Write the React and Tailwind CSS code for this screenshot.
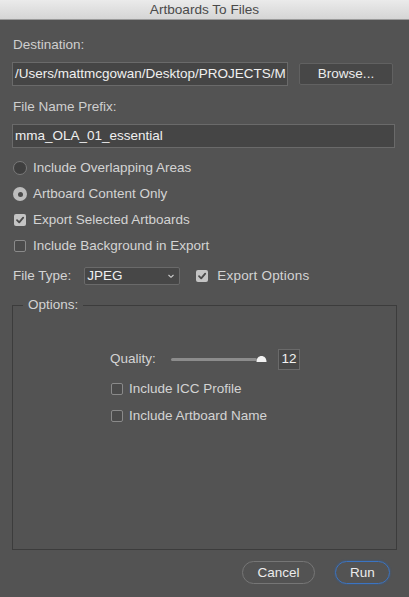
import React from "react";

const font = { fontFamily: '"Liberation Sans", Arial, sans-serif' };

function Checkbox({ checked }) {
  return checked ? (
    <span className="flex h-[12px] w-[12px] items-center justify-center rounded-[2px] bg-[#c4c4c4]">
      <svg width="10" height="10" viewBox="0 0 10 10">
        <path d="M2 5.2 L4.2 7.4 L8.2 2.6" fill="none" stroke="#4a4a4a" strokeWidth="1.8" strokeLinecap="round" strokeLinejoin="round" />
      </svg>
    </span>
  ) : (
    <span className="block h-[12px] w-[12px] rounded-[2px] border border-[#8a8a8a] bg-[#4b4b4b]" />
  );
}

function Radio({ checked }) {
  return checked ? (
    <span className="flex h-[14px] w-[14px] items-center justify-center rounded-full bg-[#bdbdbd]">
      <span className="block h-[5px] w-[5px] rounded-full bg-[#4a4a4a]" />
    </span>
  ) : (
    <span className="block h-[14px] w-[14px] rounded-full border border-[#7a7a7a] bg-[#3f3f3f]" />
  );
}

export default function App() {
  return (
    <div style={font} className="flex h-[597px] w-[409px] flex-col bg-[#535353] text-[13.5px] leading-[16px] text-[#d4d4d4]">
      <div className="flex h-[20px] items-center justify-center border-b border-[#9a9a9a] bg-gradient-to-b from-[#ebebeb] to-[#d5d5d5] text-[13.6px] text-[#4a4a4a]">
        Artboards To Files
      </div>

      <div className="flex flex-col px-[12px]">
        <div className="mt-[17px] h-[16px] pl-[1px] text-[#cfcfcf]">Destination:</div>
        <div className="mt-[9px] flex h-[24px] items-center">
          <div className="flex h-[24px] w-[276px] items-center overflow-hidden whitespace-nowrap border border-[#6a6a6a] bg-[#454545] pl-[2px] text-[#f0f0f0]">
            /Users/mattmcgowan/Desktop/PROJECTS/M
          </div>
          <div className="ml-[11px] flex h-[22px] w-[94px] items-center justify-center rounded-[2px] border border-[#616161] bg-[#474747] text-[#ededed]">
            Browse...
          </div>
        </div>

        <div className="mt-[13px] h-[16px] pl-[1px] text-[#cfcfcf]">File Name Prefix:</div>
        <div className="mt-[9px] flex h-[24px] w-[383px] items-center border border-[#6a6a6a] bg-[#454545] pl-[2px] text-[#f0f0f0]">
          mma_OLA_01_essential
        </div>

        <div className="mt-[7px] flex h-[26px] items-center">
          <span className="ml-[1px]"><Radio /></span>
          <span className="ml-[6px]">Include Overlapping Areas</span>
        </div>
        <div className="flex h-[26px] items-center">
          <span className="ml-[1px]"><Radio checked /></span>
          <span className="ml-[6px]">Artboard Content Only</span>
        </div>
        <div className="flex h-[26px] items-center">
          <span className="ml-[2px]"><Checkbox checked /></span>
          <span className="ml-[7px]">Export Selected Artboards</span>
        </div>
        <div className="flex h-[26px] items-center">
          <span className="ml-[2px]"><Checkbox /></span>
          <span className="ml-[7px]">Include Background in Export</span>
        </div>

        <div className="mt-[4px] flex h-[26px] items-center">
          <span className="pl-[1px]">File Type:</span>
          <div className="ml-[13px] flex h-[18px] w-[96px] items-center justify-between rounded-[2px] border border-[#6a6a6a] bg-[#474747] pl-[2px] pr-[4px] text-[#f0f0f0]">
            <span>JPEG</span>
            <svg width="8" height="6" viewBox="0 0 8 6">
              <path d="M1.5 2 L4 4.3 L6.5 2" fill="none" stroke="#cfcfcf" strokeWidth="1.1" />
            </svg>
          </div>
          <span className="ml-[16px]"><Checkbox checked /></span>
          <span className="ml-[9px] tracking-[0.2px]">Export Options</span>
        </div>

        <fieldset className="mt-[8px] h-[253px] w-[385px] border border-[#3c3c3c]">
          <legend className="ml-[10px] px-[5px] leading-[16px]">Options:</legend>
          <div className="ml-[97px] mt-[35px] flex h-[22px] items-center">
            <span className="w-[61px]">Quality:</span>
            <div className="flex w-[98px] items-center">
              <div className="h-[3px] w-[86px] rounded-full bg-[#8c8c8c]" />
              <svg width="11" height="10" viewBox="0 0 11 10" className="-ml-[1px]">
                <path d="M0.5 8 C0.5 4 2.8 2 5.5 2 C8.2 2 10.5 4 10.5 8 Z" fill="#f2f2f2" />
              </svg>
            </div>
            <div className="ml-[9px] flex h-[21px] w-[22px] items-center justify-center border border-[#6a6a6a] bg-[#474747] text-[#f2f2f2]">
              12
            </div>
          </div>
          <div className="ml-[98px] mt-[6px] flex h-[26px] items-center">
            <Checkbox />
            <span className="ml-[6px]">Include ICC Profile</span>
          </div>
          <div className="ml-[98px] flex h-[27px] items-center">
            <Checkbox />
            <span className="ml-[6px]">Include Artboard Name</span>
          </div>
        </fieldset>

        <div className="mt-[11px] flex items-center justify-end pr-[7px]">
          <div className="flex h-[23px] w-[73px] items-center justify-center rounded-full border border-[#767676] text-[#ececec]">
            Cancel
          </div>
          <div className="ml-[20px] flex h-[23px] w-[55px] items-center justify-center rounded-full border-[1.5px] border-[#3b74c2] text-[#ececec] shadow-[0_0_2px_#2f5f9f]">
            Run
          </div>
        </div>
      </div>
    </div>
  );
}
